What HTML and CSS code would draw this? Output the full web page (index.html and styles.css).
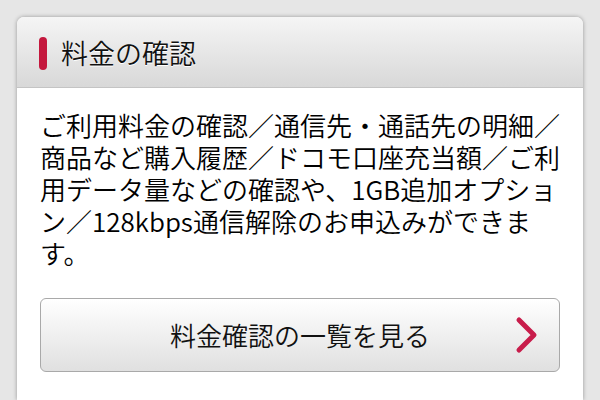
FILE: index.html
```html
<!DOCTYPE html>
<html lang="ja">
<head>
<meta charset="utf-8">
<link rel="stylesheet" href="styles.css">
</head>
<body>
<section class="card">
  <header class="card-head">
    <span class="mark"></span>
    <h2 class="title">料金の確認</h2>
  </header>
  <div class="card-body">
    <p class="desc">ご利用料金の確認／通信先・通話先の明細／<br>商品など購入履歴／ドコモ口座充当額／ご利<br>用データ量などの確認や、1GB追加オプショ<br>ン／128kbps通信解除のお申込みができま<br>す。</p>
    <a class="btn" href="#">
      <span class="btn-label">料金確認の一覧を見る</span>
      <svg class="chev" width="26" height="38" viewBox="0 0 26 38" aria-hidden="true">
        <path d="M5 4 L20 19 L5 34" fill="none" stroke="#c81d4b" stroke-width="5" stroke-linecap="round" stroke-linejoin="round"/>
      </svg>
    </a>
  </div>
</section>
</body>
</html>
```
FILE: styles.css
```css
html, body {
  margin: 0;
  padding: 0;
}
body {
  background: #e6e6e6;
  font-family: "Noto Sans CJK JP", "Noto Sans", sans-serif;
  color: #111;
  padding: 17px 17px 0 17px;
  height: 400px;
  box-sizing: border-box;
  overflow: hidden;
}
.card {
  background: #ffffff;
  border-radius: 7px 7px 0 0;
  box-shadow: 0 0 4px rgba(0, 0, 0, 0.35);
  height: 383px;
}
.card-head {
  display: flex;
  align-items: center;
  height: 70px;
  padding-left: 22px;
  border-radius: 7px 7px 0 0;
  background: linear-gradient(#f5f5f5, #d8d8d8);
  border-bottom: 1px solid #c4c4c4;
}
.mark {
  width: 8px;
  height: 33px;
  border-radius: 4px;
  background: #c4183d;
  margin-right: 14px;
  margin-top: 2px;
}
.title {
  margin: 0;
  font-size: 27px;
  font-weight: 350;
  color: #111;
  text-shadow: 0 1px 0 #ffffff;
  line-height: 1;
}
.card-body {
  padding: 21px 23px 0 23px;
}
.desc {
  margin: 0;
  font-size: 26px;
  font-weight: 350;
  line-height: 32px;
  white-space: nowrap;
  color: #000;
}
.btn {
  display: flex;
  align-items: center;
  justify-content: center;
  position: relative;
  margin-top: 29px;
  height: 72px;
  border: 1px solid #a9a9a9;
  border-radius: 6px;
  background: linear-gradient(#ffffff, #e0e0e0);
  text-decoration: none;
  color: #111;
}
.btn-label {
  font-size: 26px;
  font-weight: 350;
  line-height: 1;
}
.chev {
  position: absolute;
  right: 19px;
  top: 17px;
}
```
